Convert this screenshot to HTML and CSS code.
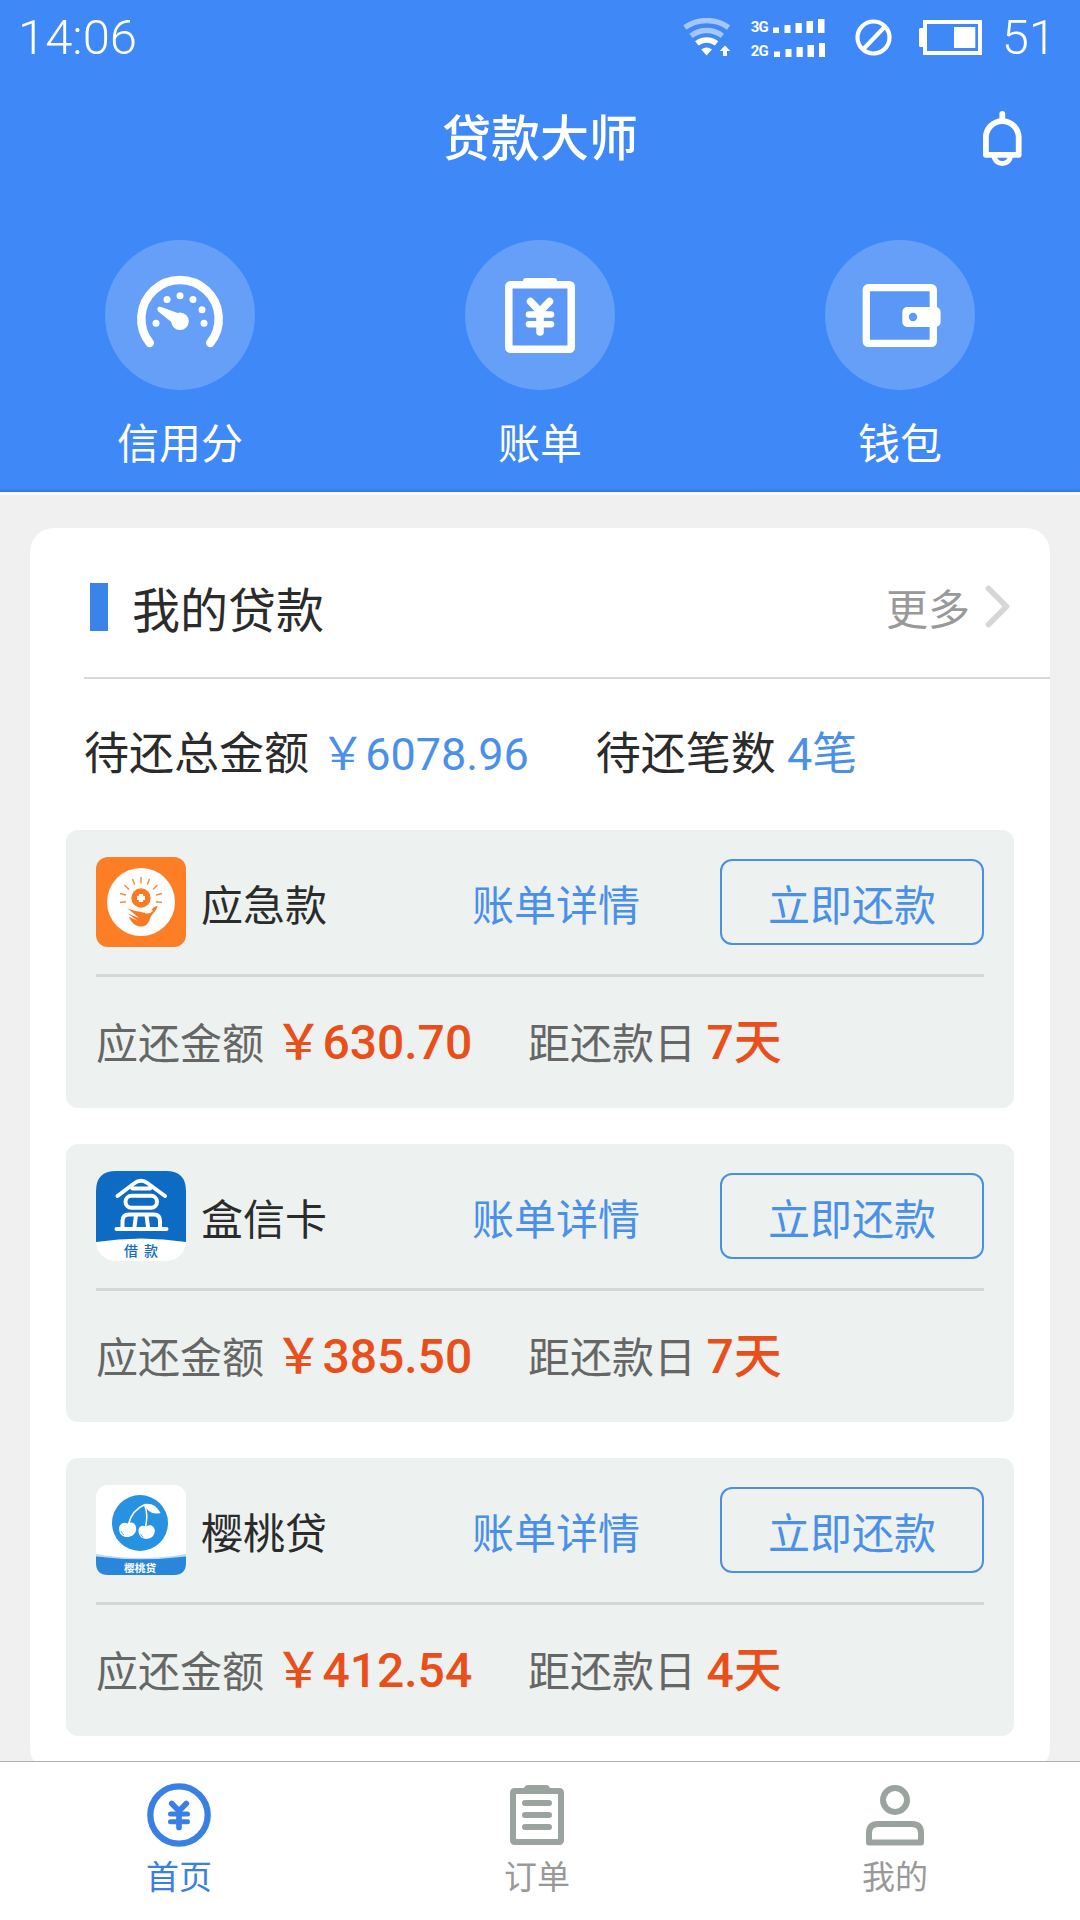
FILE: index.html
```html
<!DOCTYPE html>
<html lang="zh-CN">
<head>
<meta charset="utf-8">
<title>贷款大师</title>
<link rel="stylesheet" href="styles.css">
</head>
<body>
<div class="app">
  <header class="header">
    <div class="status">
      <span class="status-time">14:06</span>
      <div class="status-icons">
        <svg class="wifi" width="48" height="39" viewBox="0 0 48 39" fill="none" stroke="#fff">
          <g stroke-width="5.4" opacity=".52"><path d="M1.8 9.5A38 38 0 0 1 45.6 9.5"/><path d="M8 17.8A26 26 0 0 1 39.4 17.8"/></g>
          <path d="M13.8 25.4A16 16 0 0 1 33.6 25.4" stroke-width="5.6"/>
          <path d="M18.2 31.5Q23.6 27.5 29 31.5L23.6 37.5Z" fill="#fff" stroke="none"/>
          <path d="M42 27.5l5.3 5.5h-3.3v5h-4v-5h-3.3z" fill="#fff" stroke="none"/>
        </svg>
        <div class="signals">
          <div class="signal"><span class="signal-name">3G</span><svg width="52" height="14" viewBox="0 0 52 14" fill="#fff"><path d="M0 8.500h6v5.500h-6zM11.500 6h6v8h-6zM22.500 4h6.300v10h-6.300zM33.500 2h6.500v12h-6.500zM45 0h6.500v14h-6.500z"/></svg></div>
          <div class="signal"><span class="signal-name">2G</span><svg width="52" height="14" viewBox="0 0 52 14" fill="#fff"><path d="M1 8.500h6v5.500h-6zM12.500 6h6v8h-6zM23.500 4h6.300v10h-6.300zM34.500 2h6.500v12h-6.500zM46 0h6.500v14h-6.500z"/></svg></div>
        </div>
        <svg class="block" width="37" height="37" viewBox="0 0 37 37" fill="none" stroke="#fff" stroke-width="4.2"><circle cx="18.500" cy="18.500" r="16"/><path d="M30 7.500L8 30.500"/></svg>
        <svg class="battery" width="63" height="35" viewBox="0 0 63 35"><path d="M6 2h55v31H6z" fill="none" stroke="#fff" stroke-width="4"/><path d="M0 9.500Q0 8 1.500 8H5v19H1.500Q0 27 0 25.500zM35 7h21.300v21H35z" fill="#fff"/></svg>
        <span class="status-level">51</span>
      </div>
    </div>
    <div class="titlebar">
      <h1 class="title">贷款大师</h1>
      <svg class="bell" width="41" height="57" viewBox="0 0 41 57" fill="none" stroke="#fff" stroke-width="5.8"><path d="M3.900 44.800V27.500a16.400 16.400 0 0 1 32.800 0V44.800Z" stroke-linejoin="round"/><path d="M20.300 4v6" stroke-linecap="round"/><path d="M12.300 46a8 7.500 0 0 0 16 0" stroke-width="5"/></svg>
    </div>
    <nav class="shortcuts">
      <a class="shortcut">
        <svg class="disc" viewBox="0 0 150 150" fill="none" stroke="#fff" stroke-linecap="round"><path d="M44.800 103A38.700 38.700 0 1 1 105.200 103" stroke-width="8.500"/><path d="M54.500 69L72 79" stroke-width="4.500"/><path d="M53 71.200L70 85L77 74.500L56 67Z" fill="#fff" stroke="none"/><g fill="#fff" stroke="none"><circle cx="75" cy="81.300" r="8.800"/><circle cx="51" cy="83.300" r="3.500"/><circle cx="62" cy="59.500" r="3.500"/><circle cx="75" cy="55.700" r="3.500"/><circle cx="88" cy="59.500" r="3.500"/><circle cx="97" cy="69.800" r="3.500"/><circle cx="99" cy="83.300" r="3.500"/></g></svg>
        <span>信用分</span>
      </a>
      <a class="shortcut">
        <svg class="disc" viewBox="0 0 150 150" fill="none" stroke="#fff" stroke-linecap="round"><rect x="43.800" y="44.800" width="62.400" height="64.500" rx="1.500" fill="#4285f4" fill-opacity=".3" stroke-width="7.500"/><path d="M61 38h28q3 0 3 3v4H58v-4q0-3 3-3z" fill="#fff" stroke="none"/><path d="M65.500 61.500L75 71.500L84.500 61.500M75 72V92" stroke-width="7.600"/><path d="M64 74.500H86M64 84.300H86" stroke-width="6.600"/></svg>
        <span>账单</span>
      </a>
      <a class="shortcut">
        <svg class="disc" viewBox="0 0 150 150"><rect x="41.300" y="47.700" width="67" height="55.700" rx="2" fill="#4285f4" fill-opacity=".3" stroke="#fff" stroke-width="7.300"/><rect x="77.300" y="67" width="38.300" height="20" rx="5" fill="#fff"/><circle cx="88" cy="77" r="4.200" fill="#5b9af6"/></svg>
        <span>钱包</span>
      </a>
    </nav>
  </header>

  <main class="content">
    <section class="card">
      <div class="card-head">
        <h2 class="card-title">我的贷款</h2>
        <a class="more">更多<svg width="26" height="43" viewBox="0 0 26 43" fill="none" stroke="#d6d6d6" stroke-width="5.500" stroke-linecap="round" stroke-linejoin="round"><path d="M3.500 3.500L21.500 21.500L3.500 39.500"/></svg></a>
      </div>
      <p class="summary"><span>待还总金额 <b class="blue">￥6078.96</b></span><span>待还笔数 <b class="blue">4笔</b></span></p>

      <article class="loan">
        <div class="loan-top">
          <svg class="logo" viewBox="0 0 90 90"><rect width="90" height="90" rx="12" fill="#fd7e25"/><circle cx="45" cy="45" r="34" fill="#fff"/><g stroke="#f58b3d" stroke-width="1.400"><path d="M45 20v6.500M36.500 22l2.200 5.500M53.500 22l-2.200 5.500M28.500 28l4.500 4.500M61.500 28L57 32.500M24 36.500l6 1.500M66 36.500L60 38M24 45.500l6-.8M66 45.500l-6-.8"/></g><circle cx="45" cy="41" r="9.700" fill="#f97a22"/><path d="M45 37v8M41 41h8" stroke="#fff" stroke-width="4.200"/><path d="M30.500 50.500C36 54 42 54 47 55.500C53 57 55 54 57 51C59 48.800 61.500 49 61.500 49.500C60 55 55 57 53.500 63C51 71 41 72 35.500 64.500L32.500 59.500L42 64L31.500 56.500L43 61Z" fill="#f97a22"/><path d="M49 55.500Q53 57 56.500 53.500" stroke="#fff" stroke-width="1.300" fill="none"/></svg>
          <span class="loan-name">应急款</span>
          <a class="detail">账单详情</a>
          <button class="repay">立即还款</button>
        </div>
        <p class="loan-bottom"><span class="due">应还金额 <b class="hot">￥630.70</b></span><span>距还款日 <b class="hot">7天</b></span></p>
      </article>

      <article class="loan">
        <div class="loan-top">
          <svg class="logo" viewBox="0 0 90 90"><rect width="90" height="90" rx="20" fill="#fff"/><path d="M0 71V20Q0 0 20 0H70Q90 0 90 20V71Q45 64 0 71Z" fill="#0e6bc4"/><g fill="none" stroke="#fff" stroke-width="4" stroke-linecap="round" stroke-linejoin="round"><path d="M21.500 25L38 12.500Q45 7 52 12.500L69 25M36.500 17.500H54"/><rect x="29.500" y="24.800" width="31.500" height="12" rx="6"/><path d="M26.500 57V50Q26.500 43.500 33 43.500H58Q64 43.500 64 50V57M38.500 56L40 44M52 56L50.500 44M20.500 58H70.500"/></g><text class="logo-text logo-text-he" x="28" y="84.500">借</text><text class="logo-text logo-text-he" x="48" y="84.500">款</text></svg>
          <span class="loan-name">盒信卡</span>
          <a class="detail">账单详情</a>
          <button class="repay">立即还款</button>
        </div>
        <p class="loan-bottom"><span class="due">应还金额 <b class="hot">￥385.50</b></span><span>距还款日 <b class="hot">7天</b></span></p>
      </article>

      <article class="loan">
        <div class="loan-top">
          <svg class="logo" viewBox="0 0 90 90"><rect width="90" height="90" rx="12" fill="#fff"/><circle cx="44" cy="38" r="28" fill="#2791e2"/><path d="M0 69Q45 77 90 69V75H0Z" fill="#b9dcf7"/><path d="M0 71.500Q45 77 90 71.500V78Q90 90 78 90H12Q0 90 0 78Z" fill="#2a86da"/><path d="M32.500 39Q36 25 49 19.500M48.500 20Q52.500 28 49.500 42" fill="none" stroke="#fff" stroke-width="1.500"/><path d="M48 19Q59 17 64.500 28Q53 31 48 19Z" fill="#fff"/><path d="M31.500 38.500C38 35 41 41 40 45.500C38 54 25 54 23.500 46.500C21.500 40 27 36 31.500 38.500Z" fill="#fff"/><path d="M50 41.500C56 38 60 43 58.500 48C56 56 45 55.500 43 49C41 43 45 39 50 41.500Z" fill="#fff"/><path d="M25 46q1 3 3 4M44.500 49q1 2.500 3 3.300" fill="none" stroke="#2791e2" stroke-width=".8"/><text class="logo-text logo-text-ying" x="28" y="87">樱桃贷</text></svg>
          <span class="loan-name">樱桃贷</span>
          <a class="detail">账单详情</a>
          <button class="repay">立即还款</button>
        </div>
        <p class="loan-bottom"><span class="due">应还金额 <b class="hot">￥412.54</b></span><span>距还款日 <b class="hot">4天</b></span></p>
      </article>
    </section>
  </main>

  <nav class="tabbar">
    <a class="tab tab-active"><svg width="64" height="64" viewBox="0 0 64 64" fill="none" stroke="currentColor" stroke-linecap="round"><circle cx="32" cy="32" r="28.700" stroke-width="6.300"/><path d="M24.700 20.500L32 28L39.300 20.500M32 28V44.500" stroke-width="5.700"/><path d="M23.500 31H40.500M23.500 38.700H40.500" stroke-width="5"/></svg><span>首页</span></a>
    <a class="tab"><svg width="64" height="64" viewBox="0 0 64 64" fill="none" stroke="#9ba39f" stroke-width="6"><rect x="8" y="8" width="48" height="51" rx="1.500"/><path d="M23 2h18q3 0 4 3v3H19V5q1-3 4-3z" fill="#9ba39f" stroke="none"/><path d="M20 20H44M20 32H44M20 44H44" stroke-linecap="round"/></svg><span>订单</span></a>
    <a class="tab"><svg width="64" height="64" viewBox="0 0 64 64" fill="none" stroke="#9ba39f" stroke-width="6"><circle cx="32" cy="17" r="12"/><path d="M6 59.500V50Q6 41 15 41H49Q58 41 58 50V59.500Z" stroke-linejoin="round"/></svg><span>我的</span></a>
  </nav>
</div>
</body>
</html>
```
FILE: styles.css
```css
* { box-sizing: border-box; margin: 0; padding: 0; }

body {
  font-family: Roboto, "Noto Sans CJK SC", sans-serif;
  font-weight: 400;
  color: #2b2b2b;
  background: #f0f0f0;
}

svg { display: block; flex: none; }

.app { display: flex; flex-direction: column; width: 1080px; height: 1920px; overflow: hidden; }

/* Header */
.header {
  flex: none;
  height: 495px;
  border-bottom: 3px solid #f9f9f9;
  background: linear-gradient(#3e88f7 488px, #3378e0 492px);
  color: #fff;
}

.status { display: flex; justify-content: space-between; height: 76px; padding: 0 24px 0 18px; font-size: 49px; font-weight: 300; line-height: 76px; }
.status-icons { display: flex; align-items: flex-start; }
.wifi { margin: 18px 20px 0 0; }
.signals { display: flex; flex-direction: column; gap: 10px; width: 74px; margin: 19px 30px 0 0; }
.signal { display: flex; justify-content: space-between; height: 14px; }
.signal-name { width: 18px; font-size: 15px; font-weight: 700; line-height: 17px; letter-spacing: -.8px; }
.block { margin: 19px 27px 0 0; }
.battery { margin: 20px 20px 0 0; }

.titlebar { position: relative; display: flex; justify-content: center; height: 124px; line-height: 128px; }
.title { font-size: 49px; font-weight: 500; line-height: 128px; }
.bell { position: absolute; top: 34px; right: 57px; }

.shortcuts { display: grid; grid-template-columns: repeat(3, 1fr); padding-top: 40px; }
.shortcut { display: flex; flex-direction: column; align-items: center; gap: 24px; font-size: 42px; line-height: 62px; }
.disc { width: 150px; height: 150px; border-radius: 50%; background: #669ff8; }

/* Loans card */
.content { flex: 1; min-height: 0; overflow: hidden; padding: 33px 30px 0; }
.card { height: 1244px; background: #fff; border-radius: 24px; }
.card-head { display: flex; justify-content: space-between; align-items: center; height: 151px; margin-left: 54px; padding: 8px 39px 0 6px; border-bottom: 2px solid #d8d8d8; }
.card-title { display: flex; align-items: center; gap: 24px; font-size: 48px; font-weight: 400; }
.card-title::before { content: ""; width: 18px; height: 48px; background: #3a84e9; }
.more { display: flex; align-items: center; gap: 15px; font-size: 42px; color: #999; }

.summary { display: flex; gap: 67px; padding-left: 54px; font-size: 45px; line-height: 151px; white-space: pre; }
.blue { font-weight: 400; color: #4a90e8; }

.loan { height: 278px; margin: 0 36px 36px; padding: 0 30px; background: #edf2f1; border-radius: 12px; }
.loan-top { display: flex; align-items: center; height: 147px; border-bottom: 3px solid #d4d7d6; font-size: 42px; }
.logo { width: 90px; height: 90px; }
.logo-text { font-family: "Noto Sans CJK SC", sans-serif; }
.logo-text-he { font-size: 14px; font-weight: 500; fill: #0e6bc4; }
.logo-text-ying { font-size: 10.700px; font-weight: 700; fill: #fff; }
.loan-name { width: 271px; padding-left: 15px; }
.detail { padding-left: 15px; color: #4a90e8; }
.repay { width: 264px; height: 86px; margin-left: auto; border: 2.500px solid #4a90e2; border-radius: 12px; background: none; font: inherit; color: #4a90e8; }
.loan-bottom { display: flex; font-size: 42px; line-height: 131px; color: #666; white-space: pre; }
.due { width: 432px; }
.hot { font-size: 48px; font-weight: 500; color: #e94f1b; }

/* Bottom tabs */
.tabbar { flex: none; display: grid; grid-template-columns: repeat(3, 1fr); height: 159px; padding: 21px 6px 0 0; border-top: 1px solid #acb1af; background: #fff; }
.tab { display: flex; flex-direction: column; align-items: center; gap: 9px; font-size: 33px; line-height: 44px; color: #999; }
.tab-active { color: #3a80e4; }
```
